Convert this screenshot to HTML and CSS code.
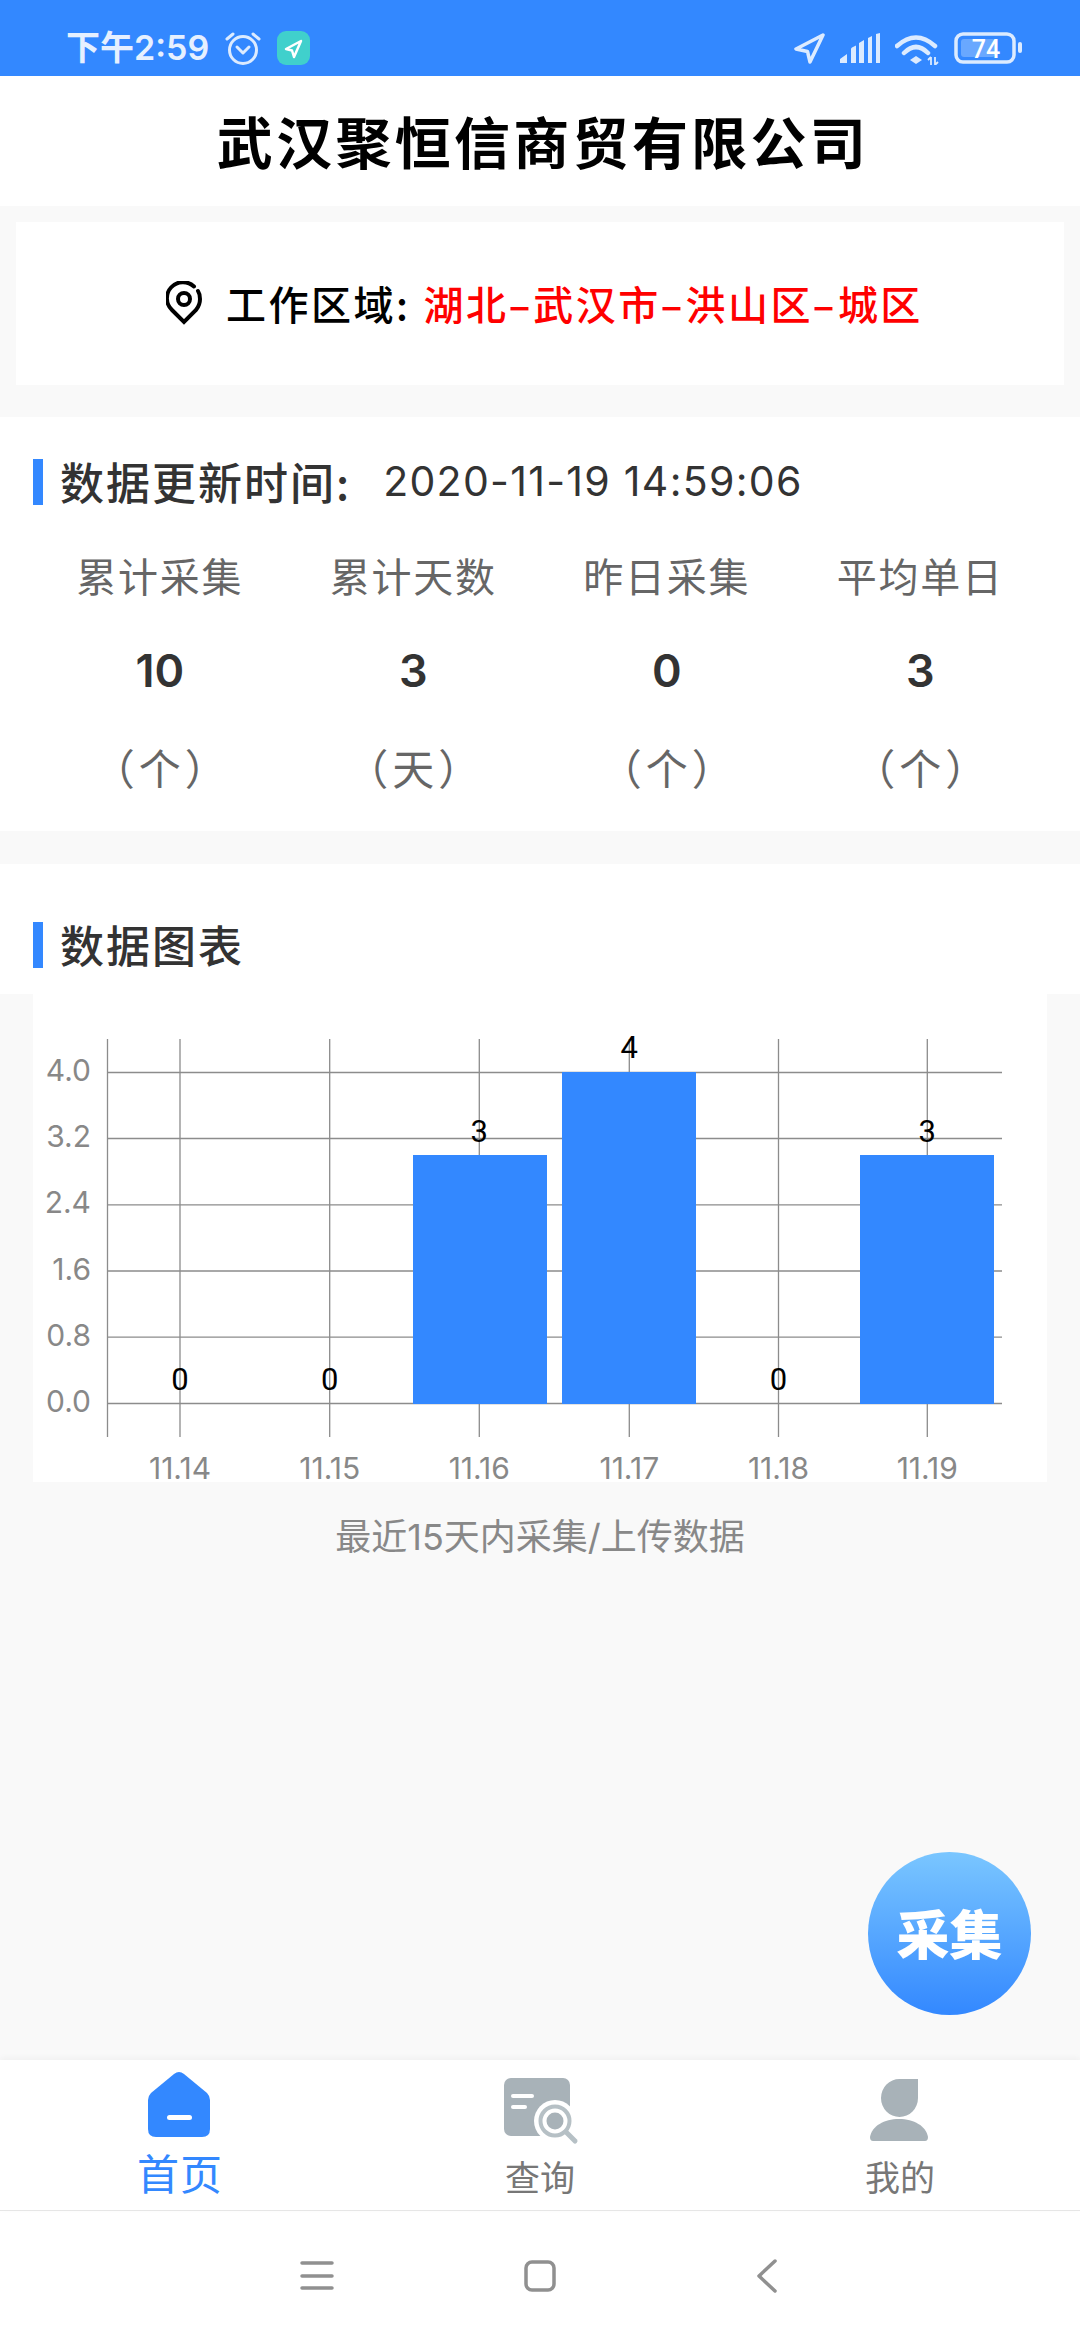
FILE: index.html
```html
<!DOCTYPE html>
<html lang="zh-CN">
<head>
<meta charset="utf-8">
<title>武汉聚恒信商贸有限公司</title>
<link rel="stylesheet" href="styles.css">
</head>
<body>
<div class="app">
  <header class="status">
    <div class="status-group">
      <span class="status-time">下午2:59</span>
      <svg class="ic-alarm" width="36" height="36" viewBox="0 0 36 36"><circle cx="18" cy="20" r="13.5"/><path d="M12 17l6 6 6-6"/><path d="M2 9l6-5M34 9l-6-5"/></svg>
      <svg class="ic-badge" width="33" height="34" viewBox="0 0 33 34"><rect class="badge-bg" width="33" height="34" rx="9"/><path class="badge-arrow" d="M24 10L9 18l6 1.5L17 26z"/></svg>
    </div>
    <div class="status-group status-right">
      <svg class="ic-loc" width="31" height="31" viewBox="0 0 31 31"><path d="M29 2L2 16l11.5 2.5L16 29z"/></svg>
      <svg class="ic-fill" width="40" height="30" viewBox="0 0 40 30"><path d="M0 30v-4l7-5v9zM11 30V16q0-1 1-1.500l4-2V30zM19 30V10l5-3v23zM28 30V5l4-2v27zM36 30V1l4-1v30z"/></svg>
      <svg class="ic-wifi" width="44" height="33" viewBox="0 0 44 33"><path d="M2 14Q21-3 40 14M9 21Q21 9 33 21"/><path class="wifi-dot" d="M21 24l6 4-6 4-6-4z"/><path class="wifi-arrows" d="M36 25v8M33 28l3-3M40 25v8l3-3"/></svg>
      <svg class="ic-batt" width="70" height="32" viewBox="0 0 70 32"><rect class="batt-body" x="2" y="2" width="58" height="28" rx="7"/><rect class="batt-level" x="7" y="7" width="34" height="18" rx="3"/><rect class="batt-nub" x="64" y="10" width="4" height="11" rx="2"/><text class="batt-text" x="32" y="26">74</text></svg>
    </div>
  </header>

  <h1 class="title">武汉聚恒信商贸有限公司</h1>

  <div class="area-wrap">
    <div class="area">
      <svg class="ic-pin" width="36" height="44" viewBox="0 0 36 44"><path d="M28 5.500A16 16 0 0 0 6 29L18 41 30 29Q34 24 34 18 34 13 32 10"/><circle cx="18" cy="18" r="6"/></svg>
      <span class="area-label">工作区域:</span>
      <span class="area-value">湖北<span class="dash">-</span>武汉市<span class="dash">-</span>洪山区<span class="dash">-</span>城区</span>
    </div>
  </div>

  <section class="stats">
    <div class="sec-head">
      <span class="sec-bar"></span>
      <span class="sec-title">数据更新时间:</span>
      <span class="sec-time">2020-11-19 14:59:06</span>
    </div>
    <div class="stat-grid">
      <div class="stat"><span class="stat-label">累计采集</span><span class="stat-num">10</span><span class="stat-unit">（个）</span></div>
      <div class="stat"><span class="stat-label">累计天数</span><span class="stat-num">3</span><span class="stat-unit">（天）</span></div>
      <div class="stat"><span class="stat-label">昨日采集</span><span class="stat-num">0</span><span class="stat-unit">（个）</span></div>
      <div class="stat"><span class="stat-label">平均单日</span><span class="stat-num">3</span><span class="stat-unit">（个）</span></div>
    </div>
  </section>

  <section class="chart-head">
    <div class="sec-head">
      <span class="sec-bar"></span>
      <span class="sec-title">数据图表</span>
    </div>
  </section>

  <svg class="chart" width="1014" height="488" viewBox="0 0 1014 488">
    <g class="grid">
      <path d="M74.500 45V443M147 45V443M296.700 45V443M446.300 45V443M596.300 45V443M745.500 45V443M894.300 45V443"/>
      <path d="M74.500 78.500H969M74.500 144.500H969M74.500 210.800H969M74.500 277H969M74.500 343.200H969M74.500 409.500H969"/>
    </g>
    <rect class="bar" x="380" y="161" width="134" height="249"/>
    <rect class="bar" x="529" y="78" width="134" height="332"/>
    <rect class="bar" x="827" y="161" width="134" height="249"/>
    <g class="y-labels">
      <text x="58" y="87">4.0</text><text x="58" y="153">3.2</text><text x="58" y="219">2.4</text><text x="58" y="286">1.6</text><text x="58" y="352">0.8</text><text x="58" y="418">0.0</text>
    </g>
    <g class="x-labels">
      <text x="147" y="485">11.14</text><text x="296.700" y="485">11.15</text><text x="446.300" y="485">11.16</text><text x="596.300" y="485">11.17</text><text x="745.500" y="485">11.18</text><text x="894.300" y="485">11.19</text>
    </g>
    <g class="values">
      <text x="147" y="396">0</text><text x="296.700" y="396">0</text><text x="446.300" y="148">3</text><text x="596.300" y="64">4</text><text x="745.500" y="396">0</text><text x="894.300" y="148">3</text>
    </g>
  </svg>

  <p class="caption">最近15天内采集/上传数据</p>

  <div class="spacer"></div>

  <nav class="tabs">
    <div class="tab tab-active">
      <svg class="tab-icon" width="72" height="72" viewBox="0 0 72 72"><path class="home" d="M30 4Q35 0 40 4L63 23Q66 26 66 30V59Q66 67 58 67H12Q4 67 4 59V30Q4 26 7 23Z"/><rect class="white" x="23" y="45" width="25" height="5" rx="2.500"/></svg>
      <span class="tab-label">首页</span>
    </div>
    <div class="tab">
      <svg class="tab-icon" width="72" height="72" viewBox="0 0 72 72"><rect class="gray" x="0" y="8" width="66" height="58" rx="7"/><rect class="white" x="7" y="24" width="23" height="4" rx="2"/><rect class="white" x="7" y="35" width="16" height="4" rx="2"/><circle class="white" cx="51" cy="51" r="21"/><path class="lens-handle" d="M62 62L71 71"/><circle class="lens-ring" cx="51" cy="51" r="14.500"/><circle class="gray" cx="51" cy="51" r="8.500"/></svg>
      <span class="tab-label">查询</span>
    </div>
    <div class="tab">
      <svg class="tab-icon" width="72" height="72" viewBox="0 0 72 72"><path class="gray" d="M54 9V28A18.500 19 0 1 1 35.500 9Z"/><path class="gray" d="M9 71Q6 71 6 67C8 56 20 49 35 49C50 49 62 56 64 67Q64 71 61 71Z"/></svg>
      <span class="tab-label">我的</span>
    </div>
  </nav>

  <footer class="sysnav">
    <svg class="nav-ic" width="40" height="40" viewBox="0 0 40 40"><path d="M5 7H35M5 20H35M5 32H35"/></svg>
    <svg class="nav-ic" width="40" height="40" viewBox="0 0 40 40"><rect x="6" y="6" width="28" height="28" rx="6"/></svg>
    <svg class="nav-ic nav-back" width="40" height="40" viewBox="0 0 40 40"><path d="M28 5L12 20L28 35"/></svg>
  </footer>

  <div class="fab">采集</div>
</div>
</body>
</html>
```
FILE: styles.css
```css
* { box-sizing: border-box; }
html, body { margin: 0; padding: 0; }
body {
  width: 1080px;
  height: 2340px;
  background: #f9f9f9;
  font-family: Inter, "Noto Sans CJK SC", sans-serif;
  color: #333;
  overflow: hidden;
}
.app {
  position: relative;
  display: flex;
  flex-direction: column;
  width: 1080px;
  height: 2340px;
}

/* status bar */
.status {
  flex: none;
  height: 76px;
  background: #3388ff;
  display: flex;
  justify-content: space-between;
  align-items: center;
  padding: 20px 56px 0 66px;
  color: #e6f0ff;
}
.status-group { display: flex; align-items: center; gap: 16px; }
.status-right { gap: 15px; }
.status-time { font-family: Inter, "Noto Sans CJK SC", sans-serif; font-size: 34px; font-weight: 600; line-height: 1; }
.ic-alarm { fill: none; stroke: #dcebff; stroke-width: 3; stroke-linecap: round; stroke-linejoin: round; }
.badge-bg { fill: #40d0cc; }
.badge-arrow { fill: none; stroke: #fff; stroke-width: 2.500; stroke-linejoin: round; }
.ic-loc { fill: none; stroke: #dcebff; stroke-width: 3.500; stroke-linejoin: round; }
.ic-fill { fill: #dcebff; }
.ic-wifi { fill: none; stroke: #dcebff; stroke-width: 4.500; stroke-linecap: round; }
.wifi-dot { fill: #dcebff; stroke: none; }
.wifi-arrows { stroke-width: 1.800; stroke-linecap: butt; }
.batt-body { fill: none; stroke: #dcebff; stroke-width: 3.500; }
.batt-level { fill: #69a8ff; }
.batt-nub { fill: #dcebff; }
.batt-text { font-family: Roboto, sans-serif; font-size: 25px; font-weight: 500; fill: #fff; text-anchor: middle; }

/* title */
.title {
  flex: none;
  height: 130px;
  margin: 0;
  padding: 0 0 4px 6px;
  background: #fff;
  display: flex;
  align-items: center;
  justify-content: center;
  font-family: "Noto Sans CJK SC", sans-serif;
  font-size: 56px;
  font-weight: 700;
  letter-spacing: 3.300px;
  color: #000;
}

/* work area */
.area-wrap { flex: none; padding: 16px 16px 32px; }
.area {
  height: 163px;
  padding: 0 0 2px 9px;
  background: #fff;
  display: flex;
  align-items: center;
  justify-content: center;
  font-family: "Noto Sans CJK SC", sans-serif;
  font-size: 40px;
  font-weight: 500;
  letter-spacing: 2.500px;
}
.ic-pin { fill: none; stroke: #000; stroke-width: 4; stroke-linecap: round; margin-right: 24px; }
.area-label { color: #000; margin-right: 13px; }
.area-value { color: #f00; }
.dash { display: inline-block; margin: 0 4px; transform: scaleX(1.7); }

/* sections */
.stats { flex: none; height: 414px; background: #fff; padding: 42px 33px 0; }
.chart-head { flex: none; height: 130px; background: #fff; margin-top: 33px; padding: 58px 33px 0; }
.sec-head { display: flex; align-items: center; height: 46px; }
.sec-bar { flex: none; width: 10px; height: 46px; background: #3388ff; margin-right: 17px; }
.sec-title { font-family: "Noto Sans CJK SC", sans-serif; font-size: 44px; font-weight: 500; letter-spacing: 2px; line-height: 46px; margin-top: -2px; color: #333; }
.sec-time { font-size: 41px; letter-spacing: 1.300px; margin-left: 32px; line-height: 46px; margin-top: -2px; color: #333; }

.stat-grid { display: grid; grid-template-columns: repeat(4, 1fr); margin-top: 42px; }
.stat { display: flex; flex-direction: column; align-items: center; }
.stat-label { font-family: "Noto Sans CJK SC", sans-serif; font-size: 40px; letter-spacing: 1.700px; line-height: 56px; color: #666; }
.stat-num { font-size: 45px; font-weight: 600; line-height: 56px; margin-top: 40px; color: #333; }
.stat-unit { font-family: "Noto Sans CJK SC", sans-serif; font-size: 42px; letter-spacing: 4px; line-height: 56px; margin-top: 40px; padding-left: 4px; color: #666; }

/* chart */
.chart { flex: none; display: block; margin-left: 33px; background: #fff; overflow: visible; }
.grid path { fill: none; stroke: #8c8c8c; stroke-width: 1.300; }
.bar { fill: #3388ff; }
.chart text { font-family: Inter, sans-serif; font-size: 30px; }
.y-labels text { fill: #888; text-anchor: end; }
.x-labels text { fill: #888; text-anchor: middle; }
.values text { font-family: Roboto, sans-serif; font-size: 31px; fill: #000; text-anchor: middle; }

.caption {
  flex: none;
  margin: 0;
  padding-top: 33px;
  line-height: 44px;
  text-align: center;
  font-size: 36px;
  color: #888;
}
.spacer { flex: 1; }

/* tabs */
.tabs {
  flex: none;
  height: 151px;
  background: #fff;
  border-bottom: 1.500px solid #e6e6e6;
  box-shadow: 0 -2px 6px rgba(0, 0, 0, 0.04);
  display: grid;
  grid-template-columns: repeat(3, 1fr);
  position: relative;
}
.tab { display: flex; flex-direction: column; align-items: center; padding-top: 10px; }
.tab-icon { display: block; overflow: visible; }
.tab-label { font-family: "Noto Sans CJK SC", sans-serif; font-size: 35px; line-height: 40px; margin-top: 14px; color: #777; }
.tab-active .tab-label { font-size: 42px; letter-spacing: 1px; margin-top: 10px; color: #3388ff; }
.home { fill: #3388ff; }
.white { fill: #fff; }
.gray { fill: #a8b2b8; }
.lens-ring { fill: #fff; stroke: #b6c0c5; stroke-width: 4; }
.lens-handle { stroke: #b6c0c5; stroke-width: 5; stroke-linecap: round; }

/* system navigation */
.sysnav {
  flex: none;
  height: 129px;
  padding-left: 4px;
  background: #fff;
  display: flex;
  align-items: center;
  justify-content: center;
  gap: 183px;
}
.nav-ic { fill: none; stroke: #909090; stroke-width: 3.500; stroke-linecap: round; stroke-linejoin: round; }
.nav-back { margin-left: 4px; }

/* floating action button */
.fab {
  position: absolute;
  left: 868px;
  top: 1852px;
  width: 163px;
  height: 163px;
  border-radius: 50%;
  background: linear-gradient(180deg, #7ac6ff 0%, #3388ff 100%);
  display: flex;
  align-items: center;
  justify-content: center;
  padding-bottom: 2px;
  color: #fff;
  font-family: "Noto Sans CJK SC", sans-serif;
  font-size: 53px;
  font-weight: 900;
  line-height: 1;
}
```
